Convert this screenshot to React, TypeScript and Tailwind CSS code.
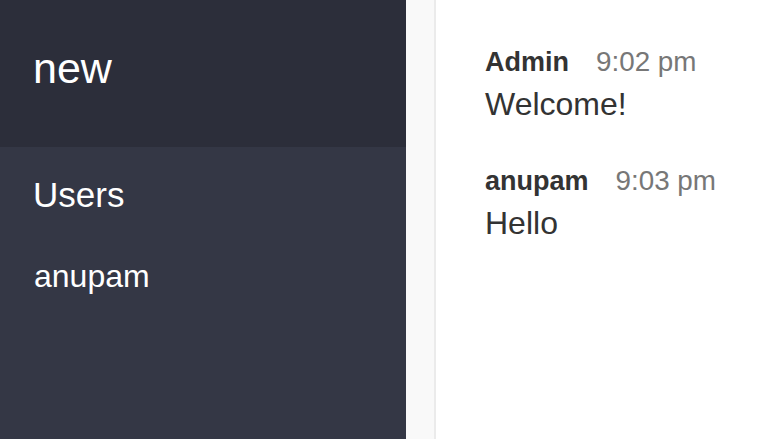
import React from "react";

interface Message {
  id: number;
  from: string;
  time: string;
  text: string;
}

const messages: Message[] = [
  { id: 1, from: "Admin", time: "9:02 pm", text: "Welcome!" },
  { id: 2, from: "anupam", time: "9:03 pm", text: "Hello" },
];

const users = ["anupam"];

function ChatMessage({ item }: { item: Message }) {
  return (
    <li className="mb-[47px]">
      <div className="flex items-baseline leading-none">
        <span className="text-[27px] font-bold text-[#333]">{item.from}</span>
        <span className="ml-[27px] text-[27.8px] text-[#777]">{item.time}</span>
      </div>
      <p className="mt-[12px] text-[32px] leading-none text-[#333]">{item.text}</p>
    </li>
  );
}

export default function App() {
  return (
    <div
      className="flex h-screen w-full overflow-hidden bg-white"
      style={{ fontFamily: '"Liberation Sans", Arial, sans-serif' }}
    >
      {/* sidebar */}
      <aside className="flex w-[406px] shrink-0 flex-col bg-[#343745] text-white">
        <div className="h-[147px] bg-[#2c2e3a] pl-[33px] pt-[47px]">
          <h2 className="text-[43px] leading-none">new</h2>
        </div>
        <div className="pl-[33px] pt-[30px]">
          <h3 className="text-[35px] leading-none">Users</h3>
          <ul className="mt-[48px] pl-[1px]">
            {users.map((u) => (
              <li key={u} className="text-[32px] leading-none">
                {u}
              </li>
            ))}
          </ul>
        </div>
      </aside>

      {/* gutter */}
      <div className="w-[30px] shrink-0 border-r-2 border-[#ebebeb] bg-[#f9f9f9]" />

      {/* chat */}
      <main className="flex-1 pl-[49px] pt-[48px]">
        <ol>
          {messages.map((m) => (
            <ChatMessage key={m.id} item={m} />
          ))}
        </ol>
      </main>
    </div>
  );
}
